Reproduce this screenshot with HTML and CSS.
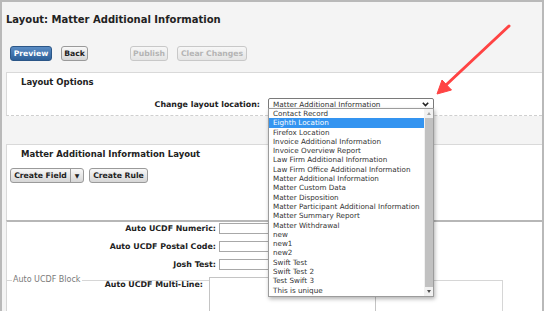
FILE: index.html
```html
<!DOCTYPE html>
<html lang="en">
<head>
  <meta charset="UTF-8" />
  <meta name="viewport" content="width=device-width, initial-scale=1" />
  <title>Layout: Matter Additional Information</title>
  <link rel="stylesheet" href="styles.css">
</head>
<body>
  <div class="frame">
    <h1 class="page-title">Layout: Matter Additional Information</h1>

    <div class="toolbar">
      <button class="btn btn-primary btn-preview">Preview</button>
      <button class="btn btn-back">Back</button>
      <button class="btn btn-publish" disabled>Publish</button>
      <button class="btn btn-clear" disabled>Clear Changes</button>
    </div>

    <section class="panel options">
      <h2>Layout Options</h2>
      <div class="option-row">
        <label>Change layout location:</label>
        <div class="select">
          <span>Matter Additional Information</span>
          <svg class="chevron" width="7" height="5" viewBox="0 0 7 5"><path d="M0.8 0.8 L3.5 3.6 L6.2 0.8" fill="none" stroke="#222" stroke-width="1.6"/></svg>
        </div>
      </div>
    </section>

    <section class="panel layout">
      <h2>Matter Additional Information Layout</h2>
      <div class="tools">
        <div class="btn split"><span class="split-label">Create Field</span><span class="caret">▼</span></div>
        <button class="btn btn-rule">Create Rule</button>
      </div>
    </section>

    <section class="form">
      <div class="row"><label>Auto UCDF Numeric:</label><input type="text" /></div>
      <div class="row"><label>Auto UCDF Postal Code:</label><input type="text" /></div>
      <div class="row"><label>Josh Test:</label><input type="text" /></div>

      <fieldset class="block">
        <legend>Auto UCDF Block</legend>
        <div class="row multi"><label>Auto UCDF Multi-Line:</label><textarea></textarea></div>
      </fieldset>
    </section>
  </div>

  <!-- open list of the layout location select -->
  <div class="dropdown">
    <ul class="options-list">
      <li>Contact Record</li>
      <li class="selected">Eighth Location</li>
      <li>Firefox Location</li>
      <li>Invoice Additional Information</li>
      <li>Invoice Overview Report</li>
      <li>Law Firm Additional Information</li>
      <li>Law Firm Office Additional Information</li>
      <li>Matter Additional Information</li>
      <li>Matter Custom Data</li>
      <li>Matter Disposition</li>
      <li>Matter Participant Additional Information</li>
      <li>Matter Summary Report</li>
      <li>Matter Withdrawal</li>
      <li>new</li>
      <li>new1</li>
      <li>new2</li>
      <li>Swift Test</li>
      <li>Swift Test 2</li>
      <li>Test Swift 3</li>
      <li>This is unique</li>
    </ul>
    <div class="scrollbar">
      <span class="arrow-up"></span>
      <span class="thumb"></span>
      <span class="arrow-down"></span>
    </div>
  </div>

  <svg class="callout" width="86" height="82" viewBox="0 0 86 82">
    <line x1="79" y1="8" x2="16" y2="67" stroke="#ff4343" stroke-width="3" stroke-linecap="round"/>
    <polygon points="7,76 21.5,72 12,62" fill="#ff4343" stroke="#ff4343" stroke-width="1" stroke-linejoin="round"/>
  </svg>
</body>
</html>
```

FILE: styles.css
```css
body {
  margin: 0;
  font-family: "DejaVu Sans", Verdana, sans-serif;
  color: #222;
}

.frame {
  height: 311px;
  box-sizing: border-box;
  border: 2px solid #b9b9b9;
  border-bottom: none;
  background: #f4f4f4;
  padding-left: 4px;
  overflow: hidden;
}

.page-title {
  margin: 0;
  padding-top: 11px;
  font-size: 10px;
  line-height: 14px;
  font-weight: bold;
}

.toolbar {
  display: flex;
  gap: 9px;
  margin-top: 19px;
  padding-left: 4px;
}

.btn {
  height: 15px;
  padding: 0;
  font-family: inherit;
  font-size: 7.7px;
  font-weight: bold;
  color: #222;
  border: 1px solid #9a9a9a;
  border-radius: 3px;
  background: linear-gradient(#f8f8f8, #d6d6d6);
  box-sizing: border-box;
  text-align: center;
}

.btn-primary {
  color: #fff;
  border-color: #2b5687;
  background: linear-gradient(#5a8cc4, #2c5f98);
}

.btn:disabled {
  color: #b4b4b4;
  border-color: #c8c8c8;
  background: linear-gradient(#f7f7f7, #e4e4e4);
}

.btn-preview { width: 42px; }
.btn-back { width: 27px; }
.btn-publish { width: 38px; margin-left: 33px; }
.btn-clear { width: 70px; }
.btn-rule { width: 59px; }

.panel {
  background: #fff;
  border-left: 1px solid #d9d9d9;
  border-top: 1px solid #d9d9d9;
}

.panel h2 {
  margin: 0;
  padding: 3px 0 0 14px;
  font-size: 8.5px;
  line-height: 12px;
  font-weight: bold;
}

.options {
  margin-top: 11px;
  padding-bottom: 5px;
  border-bottom: 1px dashed #cfcfcf;
}

.option-row {
  display: grid;
  grid-template-columns: 253px 166px;
  gap: 8px;
  align-items: center;
  margin-top: 10px;
}

.option-row label {
  text-align: right;
  font-size: 7.9px;
  font-weight: bold;
}

.select {
  height: 12px;
  box-sizing: border-box;
  display: flex;
  align-items: center;
  justify-content: space-between;
  padding: 0 4px 0 4px;
  border: 1px solid #7a7a7a;
  border-radius: 2px;
  font-size: 7.3px;
  color: #333;
}

.layout {
  margin-top: 28px;
  height: 75px;
}

.tools {
  display: flex;
  gap: 5px;
  margin: 8px 0 0 3px;
}

.split {
  width: 74px;
  display: flex;
  align-items: center;
}

.split-label {
  flex: 1;
  border-right: 1px solid #9a9a9a;
  line-height: 13px;
}

.caret {
  width: 12px;
  font-size: 6px;
}

.form {
  height: 100px;
  background: #fff;
  border-top: 2px solid #b7b7b7;
  border-left: 1px solid #d9d9d9;
  padding-top: 1px;
}

.row {
  display: grid;
  grid-template-columns: 209px 150px;
  gap: 3px;
  align-items: center;
  height: 18px;
}

.row label {
  text-align: right;
  font-size: 7.9px;
  font-weight: bold;
  align-self: start;
  line-height: 11px;
}

.row input {
  height: 11px;
  box-sizing: border-box;
  border: 1px solid #a8a8a8;
  align-self: start;
  margin: 0;
  padding: 0;
}

.block {
  margin: -2px 0 0 -1px;
  padding: 0;
  width: 497px;
  box-sizing: border-box;
  border: 1px solid #d6d6d6;
}

.block legend {
  margin-left: 5px;
  padding: 0 1px;
  font-size: 8px;
  line-height: 10px;
  color: #7a7a7a;
}

.multi {
  grid-template-columns: 196px 167px;
  gap: 6px;
  margin-top: -8px;
  height: auto;
}

.multi label {
  padding-top: 2px;
}

.multi textarea {
  height: 40px;
  box-sizing: border-box;
  margin: 0;
  border: 1px solid #c4c4c4;
  resize: none;
}

.dropdown {
  position: absolute;
  left: 268px;
  top: 108px;
  width: 166px;
  height: 189px;
  box-sizing: border-box;
  border: 1px solid #9c9c9c;
  background: #fff;
  box-shadow: 1px 2px 4px rgba(0, 0, 0, 0.3);
  display: flex;
}

.options-list {
  list-style: none;
  margin: 0;
  padding: 0;
  flex: 1;
  font-size: 7.2px;
  color: #333;
}

.options-list li {
  height: 9.3px;
  line-height: 9.3px;
  padding-left: 4px;
  white-space: nowrap;
}

.options-list li.selected {
  background: #3494f0;
  color: #fff;
}

.scrollbar {
  width: 9px;
  display: flex;
  flex-direction: column;
  align-items: center;
  background: #f1f1f1;
}

.arrow-up,
.arrow-down {
  width: 0;
  height: 0;
  margin: 3px 0;
  border-left: 2.5px solid transparent;
  border-right: 2.5px solid transparent;
}

.arrow-up {
  border-bottom: 3px solid #a3a3a3;
}

.arrow-down {
  border-top: 3px solid #505050;
}

.thumb {
  flex: 1;
  width: 8px;
  background: #c1c1c1;
}

.callout {
  position: absolute;
  left: 430px;
  top: 18px;
}
```
